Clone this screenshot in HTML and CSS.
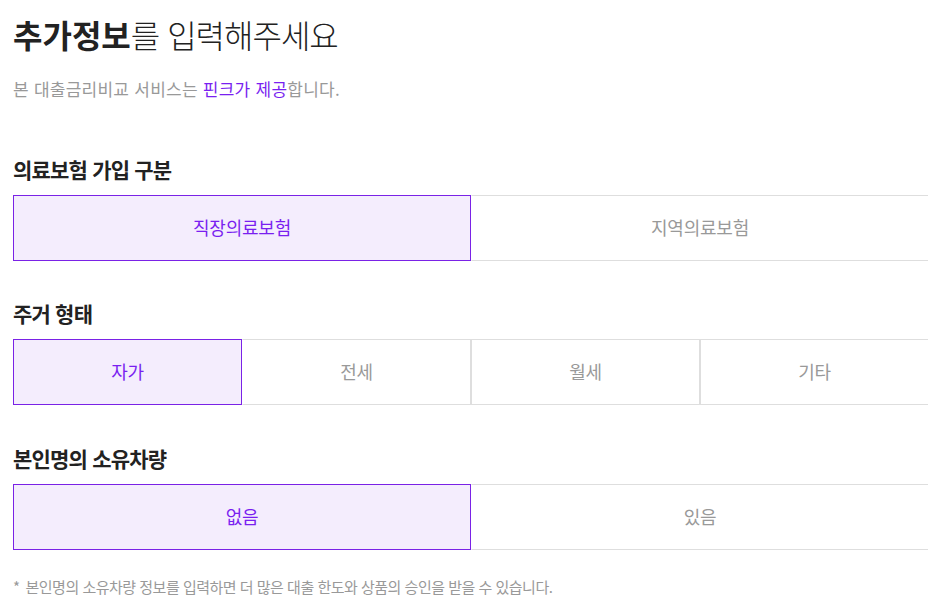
FILE: index.html
```html
<!DOCTYPE html>
<html lang="ko">
<head>
<meta charset="utf-8">
<title>추가정보</title>
<link rel="stylesheet" href="styles.css">
</head>
<body>
<main class="page">
  <h1 class="title"><strong>추가정보</strong>를 입력해주세요</h1>
  <p class="sub">본 대출금리비교 서비스는 <span class="accent">핀크가 제공</span>합니다.</p>

  <section class="field">
    <h2 class="label">의료보험 가입 구분</h2>
    <div class="options two">
      <button class="opt on">직장의료보험</button>
      <button class="opt">지역의료보험</button>
    </div>
  </section>

  <section class="field">
    <h2 class="label">주거 형태</h2>
    <div class="options four">
      <button class="opt on">자가</button>
      <button class="opt">전세</button>
      <button class="opt">월세</button>
      <button class="opt">기타</button>
    </div>
  </section>

  <section class="field last">
    <h2 class="label">본인명의 소유차량</h2>
    <div class="options two">
      <button class="opt on">없음</button>
      <button class="opt">있음</button>
    </div>
  </section>

  <p class="note"><span class="star">*</span>본인명의 소유차량 정보를 입력하면 더 많은 대출 한도와 상품의 승인을 받을 수 있습니다.</p>
</main>
</body>
</html>
```

FILE: styles.css
```css
html, body {
  margin: 0;
  padding: 0;
  background: #fff;
  overflow: hidden;
}
body {
  font-family: "Noto Sans CJK KR", "Noto Sans", sans-serif;
  color: #222;
}
.page {
  padding: 14px 0 0 13px;
  width: 916px;
}
.title {
  margin: 0;
  font-size: 32px;
  line-height: 40px;
  font-weight: 300;
  letter-spacing: -1px;
  color: #222;
}
.title strong {
  font-weight: 700;
  letter-spacing: 0;
}
.sub {
  margin: 23px 0 0;
  font-size: 17px;
  line-height: 24px;
  color: #999;
  letter-spacing: 0.25px;
}
.accent {
  color: #7a1ff0;
}
.field {
  margin-top: 55px;
}
.field + .field {
  margin-top: 39px;
}
.field.last {
  margin-top: 40px;
}
.label {
  margin: 0 0 13px;
  font-size: 21px;
  line-height: 26px;
  font-weight: 700;
  letter-spacing: -0.8px;
  color: #222;
}
.options {
  display: grid;
  height: 66px;
}
.options.two {
  grid-template-columns: 1fr 1fr;
}
.options.four {
  grid-template-columns: repeat(4, 1fr);
}
.opt {
  font-family: inherit;
  font-size: 18px;
  letter-spacing: -0.2px;
  color: #999;
  background: #fff;
  border: 1px solid #dedede;
  margin: 0;
  padding: 0 0 3px;
  cursor: pointer;
}
.opt.on {
  background: #f4edfd;
  border-color: #7a22e6;
  color: #7a1ff0;
}
.opt.on + .opt {
  border-left-color: transparent;
}
.note {
  margin: 27px 0 0;
  font-size: 15px;
  line-height: 20px;
  color: #999;
  letter-spacing: -0.5px;
}
.star {
  margin-right: 6px;
}
```
